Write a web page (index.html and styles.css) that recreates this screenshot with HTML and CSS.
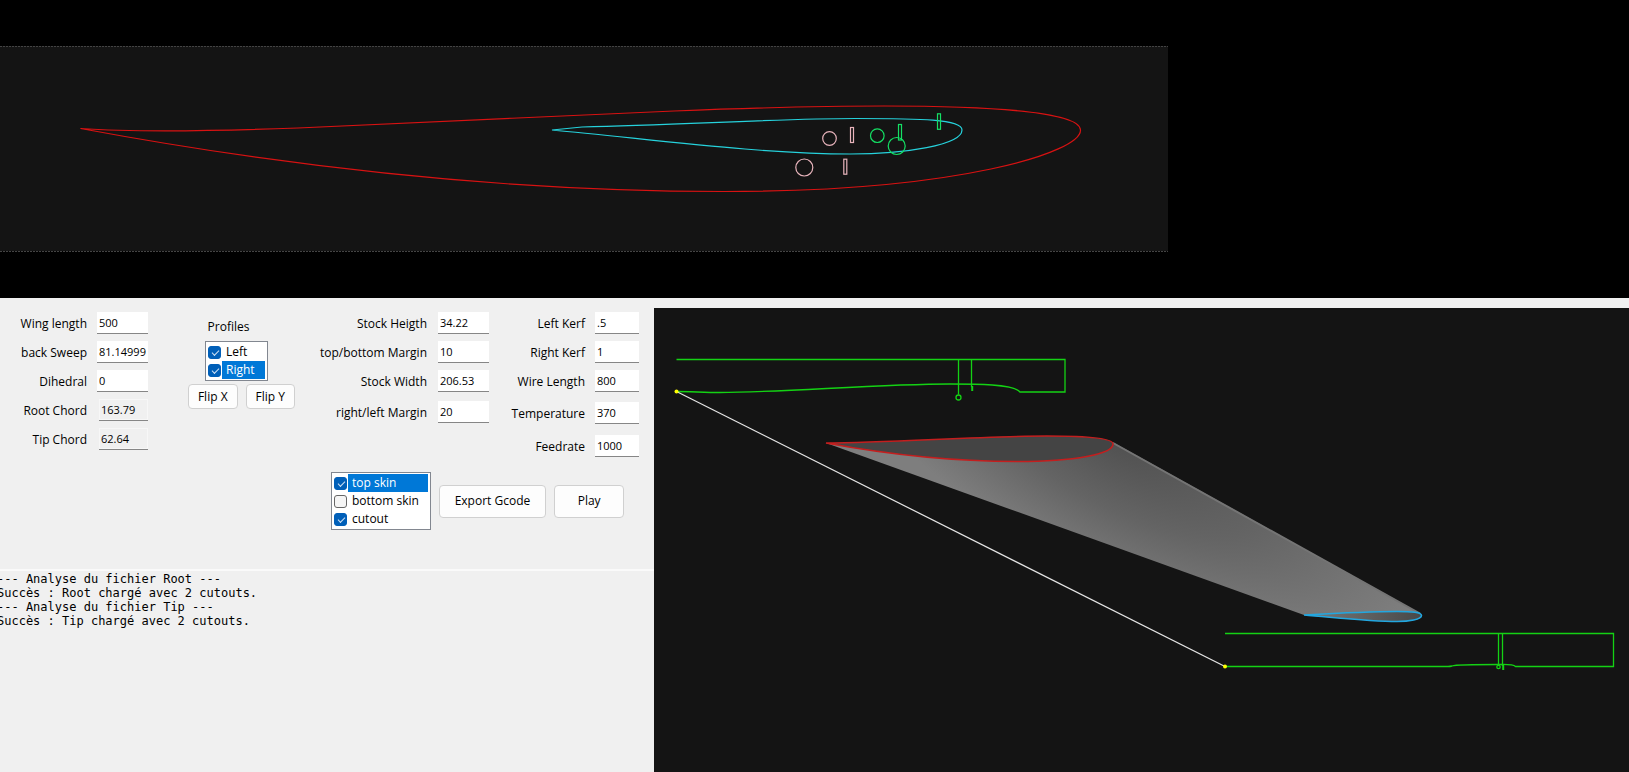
FILE: index.html
```html
<!DOCTYPE html>
<html lang="en">
<head>
<meta charset="utf-8">
<title>Wing cutter</title>
<link rel="stylesheet" href="styles.css">
</head>
<body>
<main class="app">
  <section class="profile-view" aria-label="Profile view">
    <svg class="drawing" viewBox="0 0 1629 298" preserveAspectRatio="xMinYMin meet">
      <rect class="stock" x="0" y="46" width="1168" height="205"/>
      <path class="stock-edge" d="M0 46.5H1168M0 251.5H1168"/>
      <path class="root-line" d="M80.5 128.5C130 132 190 132 298 128C420 123 550 116 674 111C750 108 820 106 884 106C990 106 1080 112 1080.5 130C1081 152 960 191.5 724 191.5C480 191.5 250 160 80.5 128.5Z"/>
      <path class="tip-line" d="M552 130L582 127C680 125 780 118.5 855 118.5C920 118.5 962 119 962 130C962 145 905 154 850 154C760 154 650 139 552 130Z"/>
      <g class="cut-pink">
        <circle cx="829.5" cy="138.5" r="6.8"/>
        <circle cx="804.3" cy="167.5" r="8.5"/>
        <rect x="850.5" y="127.5" width="3" height="15"/>
        <rect x="843.8" y="159.2" width="3" height="15"/>
      </g>
      <g class="cut-green">
        <circle cx="877.3" cy="135.7" r="6.8"/>
        <circle cx="896.7" cy="146" r="8.5"/>
        <rect x="898.5" y="124.5" width="3" height="15.5"/>
        <rect x="937.5" y="113.8" width="3" height="15.5"/>
      </g>
    </svg>
  </section>

  <section class="panel">
    <form class="controls">
      <div class="groups">
        <div class="fields wing">
          <label for="wing-length">Wing length</label><input id="wing-length" type="text" value="500">
          <label for="back-sweep">back Sweep</label><input id="back-sweep" type="text" value="81.14999999">
          <label for="dihedral">Dihedral</label><input id="dihedral" type="text" value="0">
          <label for="root-chord">Root Chord</label><input id="root-chord" type="text" value="163.79" readonly>
          <label for="tip-chord">Tip Chord</label><input id="tip-chord" type="text" value="62.64" readonly>
        </div>

        <div class="profiles">
          <span class="title" id="profiles-title">Profiles</span>
          <div class="checklist" role="group" aria-labelledby="profiles-title">
            <label><input type="checkbox" checked><span>Left</span></label>
            <label class="selected"><input type="checkbox" checked><span>Right</span></label>
          </div>
          <div class="flips">
            <button type="button">Flip X</button>
            <button type="button">Flip Y</button>
          </div>
        </div>

        <div class="fields stock-fields">
          <label for="stock-height">Stock Heigth</label><input id="stock-height" type="text" value="34.22">
          <label for="tb-margin">top/bottom Margin</label><input id="tb-margin" type="text" value="10">
          <label for="stock-width">Stock Width</label><input id="stock-width" type="text" value="206.53">
          <label for="rl-margin">right/left Margin</label><input id="rl-margin" type="text" value="20">
        </div>

        <div class="fields machine">
          <label for="left-kerf">Left Kerf</label><input id="left-kerf" type="text" value=".5">
          <label for="right-kerf">Right Kerf</label><input id="right-kerf" type="text" value="1">
          <label for="wire-length">Wire Length</label><input id="wire-length" type="text" value="800">
          <label for="temperature">Temperature</label><input id="temperature" type="text" value="370">
          <label for="feedrate">Feedrate</label><input id="feedrate" type="text" value="1000">
        </div>
      </div>

      <div class="actions">
        <div class="checklist" role="group" aria-label="Cuts">
          <label class="selected"><input type="checkbox" checked><span>top skin</span></label>
          <label><input type="checkbox"><span>bottom skin</span></label>
          <label><input type="checkbox" checked><span>cutout</span></label>
        </div>
        <button type="button" class="export">Export Gcode</button>
        <button type="button" class="play">Play</button>
      </div>
    </form>
    <pre class="console">--- Analyse du fichier Root ---
Succès : Root chargé avec 2 cutouts.
--- Analyse du fichier Tip ---
Succès : Tip chargé avec 2 cutouts.</pre>
  </section>

  <section class="wing-view" aria-label="3D view">
    <svg class="drawing" viewBox="654 308 975 464" preserveAspectRatio="xMinYMin meet">
      <defs>
        <radialGradient id="skin" gradientUnits="userSpaceOnUse" cx="0" cy="0" r="1" gradientTransform="translate(1113 438) rotate(29) scale(340 130)">
          <stop offset="0" stop-color="#505050"/>
          <stop offset="0.5" stop-color="#646464"/>
          <stop offset="1" stop-color="#7e7e7e"/>
        </radialGradient>
        <linearGradient id="tip-face" x1="0" y1="0" x2="1" y2="0">
          <stop offset="0" stop-color="#7a7a7a"/>
          <stop offset="1" stop-color="#484848"/>
        </linearGradient>
      </defs>
      <path fill="url(#skin)" d="M826 443L1113 442L1421 614L1304 615Z"/>
      <path class="skin-edge" d="M1113 443L1420 613.5"/>
      <path class="root-face" d="M826 443C890 443 980 436 1047 436C1085 436 1113 438 1113 444C1113 454 1075 461.5 1017 461.5C950 461.5 880 453 826 443Z"/>
      <path class="tip-face" fill="url(#tip-face)" d="M1304 615C1340 613 1370 611.5 1397 611.5C1412 611.5 1421.5 612 1421.5 615.5C1421.5 619.5 1409 621.5 1397 621.5C1370 621.5 1340 618 1304 615Z"/>
      <path class="path-line" d="M676.5 359.5H1065V392H1020C1014 384 975 384 950 384C880 384 780 392.5 720 392.5C705 392.5 690 391.5 676.5 391.5"/>
      <path class="path-line" d="M958.5 359.5V394.5M971.5 359.5V387"/>
      <circle class="path-line" cx="958.5" cy="397.5" r="2.5"/>
      <path class="path-slot" d="M972.2 386V391"/>
      <path class="path-line" d="M1225 633.5H1613.5V666.500H1515.5C1513 664 1508 664.5 1498 664.5C1480 664.5 1455 665 1452 666C1450 666.5 1449 666.5 1448 666.5H1225"/>
      <path class="path-line" d="M1498.5 633.5V665.5M1502.5 633.5V666"/>
      <circle class="path-line" cx="1498.5" cy="667" r="1.7"/>
      <path class="path-slot" d="M1503.2 665V670"/>
      <path class="wire" d="M676.5 391.5L1225 666.5"/>
      <circle class="pin" cx="676.5" cy="391.5" r="2"/>
      <circle class="pin" cx="1225" cy="666.5" r="2"/>
    </svg>
  </section>
</main>
</body>
</html>
```
FILE: styles.css
```css
* { box-sizing: border-box; }

body {
  margin: 0;
  background: #f0f0f0;
  color: #000;
  font: 12px/16px "Open Sans", "Noto Sans", sans-serif;
}

.app {
  display: grid;
  grid-template-columns: minmax(654px, 40fr) minmax(0, 975px);
  grid-template-rows: auto 1fr;
  min-height: 100vh;
}

.drawing { display: block; width: 100%; }

.profile-view { grid-column: 1 / -1; background: #000; }
.stock { fill: #141414; }
.stock-edge { stroke: #444; stroke-dasharray: 2 1; }
.root-line, .tip-line, .cut-pink, .cut-green { fill: none; stroke-width: 1.2; }
.root-line { stroke: #d81212; }
.tip-line { stroke: #26d2dc; }
.cut-pink { stroke: #e8b4bc; }
.cut-green { stroke: #14e064; }

.wing-view { margin-top: 10px; background: #141414; }
.root-face { fill: #444; stroke: #c41e1e; stroke-width: 1.6; }
.tip-face { stroke: #22a7e0; stroke-width: 1.6; }
.skin-edge { stroke: #747474; stroke-width: 2; }
.path-line { fill: none; stroke: #14d214; stroke-width: 1.3; }
.path-slot { stroke: #14d214; stroke-width: 2; }
.wire { stroke: #e6e6e6; stroke-width: 1.2; }
.pin { fill: #ff0; }

.panel { display: flex; flex-direction: column; }
.controls { padding: 14px 15px 39px 0; }
.groups { display: flex; align-items: flex-start; }

.fields { display: grid; align-items: start; }
.fields label { line-height: 24px; text-align: right; white-space: nowrap; }
.fields input {
  width: 100%;
  height: 22px;
  padding: 0 2px 1px;
  border: 0;
  border-bottom: 1px solid #868686;
  background: #fff;
  font: 11px/16px "Open Sans", "Noto Sans", sans-serif;
}
.fields input:read-only { justify-self: end; width: 49px; background: #f0f0f0; box-shadow: inset 0 0 0 1px #f7f7f7; }
.wing { grid-template-columns: 87px 51px; column-gap: 10px; grid-auto-rows: 29px; }
.stock-fields { grid-template-columns: 132px 51px; column-gap: 11px; grid-template-rows: 29px 29px 31px 22px; }
.machine { grid-template-columns: 96px 44px; column-gap: 10px; grid-template-rows: 29px 29px 32px 33px 22px; }

.profiles { display: flex; flex-direction: column; align-items: center; width: 107px; margin-left: 40px; padding-top: 7px; }
.title { margin-right: 26px; }
.checklist { width: 63px; margin: 6px 10px 3px 0; padding: 1px; border: 1px solid #828790; background: #fff; }
.checklist label { display: flex; align-items: center; gap: 1px; height: 18px; padding: 0 1px; }
.checklist span { flex: 1; padding: 0 4px; line-height: 18px; white-space: nowrap; }
.checklist .selected span { background: #0078d7; color: #fff; }
.checklist input {
  appearance: none;
  width: 13px;
  height: 13px;
  margin: 0;
  border: 1px solid #666;
  border-radius: 3px;
  background: #f5f5f5;
}
.checklist input:checked {
  border-color: #005fb8;
  background: #005fb8;
}
.checklist input:checked::after {
  content: "";
  display: block;
  width: 6px;
  height: 3px;
  margin: 3px 0 0 3px;
  border: solid #cfe2f4;
  border-width: 0 0 1px 1px;
  transform: rotate(-45deg);
}
.flips { display: flex; gap: 8px; width: 100%; }
.flips button { flex: 1; height: 25px; }

button {
  padding: 0;
  border: 1px solid #d0d0d0;
  border-radius: 4px;
  background: #fdfdfd;
  color: #000;
  font: inherit;
}

.actions { display: flex; align-items: center; gap: 8px; margin: 15px 15px 0 331px; }
.actions .checklist { width: 100px; margin: 0; }
.actions button { height: 33px; }
.export { width: 108px; }
.play { width: 70px; }

.console {
  flex: 1;
  margin: 0 0 0 -3px;
  padding: 1px 0 0;
  border-top: 2px solid #fafafa;
  overflow: hidden;
  font: 12px/14px "DejaVu Sans Mono", "Liberation Mono", monospace;
}
```
